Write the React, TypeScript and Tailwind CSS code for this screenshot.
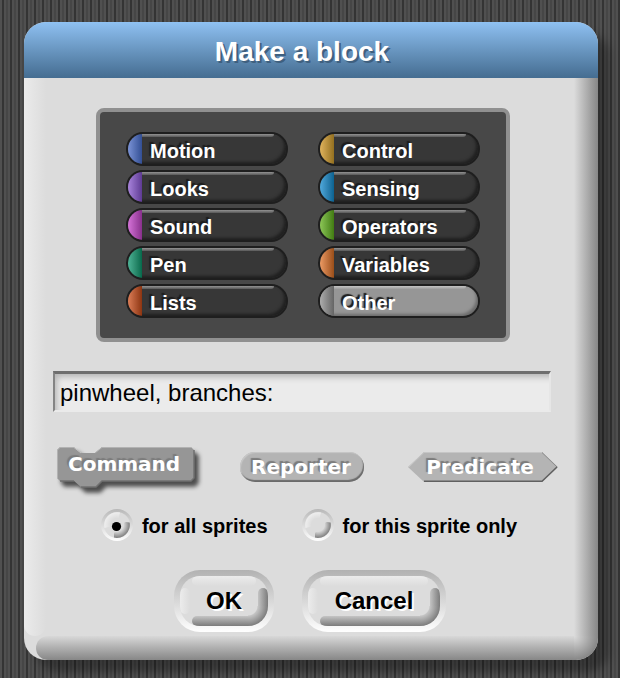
import { useState } from "react";

const UI = "font-['Liberation_Sans',Arial,sans-serif]";

const CATEGORIES = [
  { name: "Motion", tint: "from-[#7b93d6] to-[#334f94]" },
  { name: "Control", tint: "from-[#e0b35c] to-[#94701f]" },
  { name: "Looks", tint: "from-[#a984dc] to-[#5f3b94]" },
  { name: "Sensing", tint: "from-[#4fa9dc] to-[#0a6290]" },
  { name: "Sound", tint: "from-[#d573d8] to-[#89308d]" },
  { name: "Operators", tint: "from-[#8cc656] to-[#427c10]" },
  { name: "Pen", tint: "from-[#4db497] to-[#046a4c]" },
  { name: "Variables", tint: "from-[#ec9a63] to-[#9a4e18]" },
  { name: "Lists", tint: "from-[#dc7d56] to-[#8d3510]" },
  { name: "Other", tint: "from-[#adadad] to-[#656565]" },
];

function CategoryButton({ name, tint, active, onClick }: { name: string; tint: string; active: boolean; onClick: () => void }) {
  return (
    <button
      type="button"
      onClick={onClick}
      aria-pressed={active}
      className={`relative flex h-[34px] w-[162px] items-center overflow-hidden rounded-full border-2 border-[#1e1e1e] text-left ${
        active
          ? "bg-[#969696] shadow-[inset_-3px_-3px_3px_-1px_#6c6c6c]"
          : "bg-[#373737] shadow-[inset_-3px_-3px_3px_-1px_#202020]"
      }`}
    >
      <span className={`h-full w-[14px] shrink-0 bg-linear-to-r ${tint}`} />
      <span
        className={`absolute left-[14px] right-3 top-0 h-[3px] rounded-br-full bg-linear-to-b ${
          active ? "from-[#c4c4c4] to-[#9c9c9c]" : "from-[#949494] to-[#585858]"
        }`}
      />
      <span className="relative pl-2 pt-1 text-xl leading-6 font-bold text-white [text-shadow:-2px_-2px_1px_#1c1c1c]">{name}</span>
    </button>
  );
}

function PushButton({ label, width }: { label: string; width: string }) {
  return (
    <button type="button" className={`h-[62px] rounded-[26px] bg-linear-to-b from-[#b2b2b2] to-white p-1.5 ${width}`}>
      <span className="relative flex h-full items-center justify-center overflow-hidden rounded-[20px] bg-[#dcdcdc]">
        <span className="absolute top-0 right-3 left-3 h-2.5 rounded-full bg-linear-to-b from-[#ececec] to-[#dcdcdc]" />
        <span className="absolute top-3 bottom-3 left-0 w-2.5 rounded-full bg-linear-to-r from-[#ececec] to-[#dcdcdc]" />
        <span className="absolute top-3 right-0 bottom-5 w-2.5 rounded-t-full bg-linear-to-r from-[#c4c4c4] to-[#7c7c7c]" />
        <span className="absolute right-5 bottom-0 left-3 h-2.5 rounded-l-full bg-linear-to-b from-[#c4c4c4] to-[#7c7c7c]" />
        <span className="absolute right-0 bottom-0 h-5 w-5 bg-[radial-gradient(circle_at_0_0,transparent_9px,#c4c4c4_10px,#7c7c7c_20px)]" />
        <span className="relative text-2xl leading-7 font-bold text-black [text-shadow:2px_2px_0_#fff]">{label}</span>
      </span>
    </button>
  );
}

function ScopeRadio({ id, label, checked, onChange }: { id: string; label: string; checked: boolean; onChange: () => void }) {
  return (
    <div className="flex items-center gap-[9px]">
      <span className="grid h-8 w-8">
        <input
          id={id}
          type="radio"
          name="scope"
          checked={checked}
          onChange={onChange}
          className="col-start-1 row-start-1 h-8 w-8 appearance-none rounded-full bg-linear-to-b from-[#b8b8b8] to-white"
        />
        <svg viewBox="0 0 32 32" className="pointer-events-none col-start-1 row-start-1 h-8 w-8" aria-hidden="true">
          <defs>
            <radialGradient id={`${id}-shade`} cx="16" cy="16" r="13" gradientUnits="userSpaceOnUse">
              <stop offset="0.5" stopColor="#dadada" />
              <stop offset="1" stopColor="#7c7c7c" />
            </radialGradient>
            <radialGradient id={`${id}-light`} cx="16" cy="16" r="13" gradientUnits="userSpaceOnUse">
              <stop offset="0.5" stopColor="#dcdcdc" />
              <stop offset="1" stopColor="#efefef" />
            </radialGradient>
          </defs>
          <circle cx="16" cy="16" r="13" fill="#dcdcdc" />
          <path d="M3.5 19A13 13 0 0 1 19 3.5L17.5 9.5A6.5 6.5 0 0 0 9.5 17.5Z" fill={`url(#${id}-light)`} />
          <path d="M28.6 13.5A13 13 0 0 1 13 28.6V24.5Q13 23 15 22.8Q22.5 22 22.8 15Q23 13 25 13Z" fill={`url(#${id}-shade)`} />
          {checked && <circle cx="15.5" cy="17.5" r="4.6" fill="#000" />}
        </svg>
      </span>
      <label htmlFor={id} className="pt-0.5 text-xl leading-6 font-bold text-black">
        {label}
      </label>
    </div>
  );
}

const BLOCK_TEXT =
  "font-['DejaVu_Sans',Verdana,sans-serif] text-xl leading-6 font-bold text-white [text-shadow:-2px_-2px_1px_#7b7b7b]";

export default function App() {
  const [category, setCategory] = useState("Other");
  const [scope, setScope] = useState("all");
  const [name, setName] = useState("pinwheel, branches:");

  return (
    <main
      className={`${UI} min-h-screen bg-[repeating-linear-gradient(90deg,#505050_0,#505050_2px,#343434_2px,#343434_4px,#505050_4px,#505050_6px,#464646_6px,#464646_8px)] pt-[22px] pr-[22px] pb-[18px] pl-6`}
    >
      <form
        onSubmit={(e) => e.preventDefault()}
        className="relative overflow-hidden rounded-[22px] bg-[#dcdcdc] shadow-[12px_12px_8px_rgba(0,0,0,0.3)]"
      >
        <header className="flex h-14 items-center justify-center bg-linear-to-b from-[#8fc1f2] to-[#456d91] pr-[18px]">
          <h1 className="pt-1 text-[28px] leading-8 font-bold text-white [text-shadow:2px_2px_0_#3f607f]">Make a block</h1>
        </header>

        {/* Bevelled edges of the dialog body */}
        <span className="absolute top-14 bottom-6 left-0 w-[22px] rounded-b-xl bg-linear-to-r from-[#ebebeb] to-[#dcdcdc]" />
        <span className="absolute top-14 right-0 bottom-6 w-6 bg-linear-to-r from-[#dcdcdc] to-[#878787]" />
        <span className="absolute right-6 bottom-0 left-3 h-6 rounded-l-full bg-linear-to-b from-[#d8d8d8] to-[#878787]" />
        <span className="absolute right-0 bottom-0 h-6 w-6 bg-[radial-gradient(circle_at_0_0,#dcdcdc_0,#878787_24px)]" />

        <div className="relative px-[29px] pt-[30px] pb-7">
          <div className="flex justify-center pr-4">
            <div className="grid grid-cols-2 gap-x-[30px] gap-y-1 rounded-lg border-4 border-[#909090] bg-[#484848] px-[26px] py-5">
              {CATEGORIES.map((c) => (
                <CategoryButton key={c.name} {...c} active={c.name === category} onClick={() => setCategory(c.name)} />
              ))}
            </div>
          </div>

          <div className="pt-[29px] pr-[18px]">
            <input
              type="text"
              aria-label="Block name"
              value={name}
              onChange={(e) => setName(e.target.value)}
              className="block h-[41px] w-full border-2 border-t-[3px] border-t-[#6e6e6e] border-r-[#e6e6e6] border-b-[#eaeaea] border-l-[#848484] bg-[#ebebeb] pt-0.5 pl-[5px] text-2xl leading-8 text-black shadow-[inset_5px_6px_6px_-3px_#b4b4b4] outline-none"
            />
          </div>

          <div className="flex items-start justify-center gap-11 pt-[34px] pr-2">
            <button type="button" className="relative flex h-[42px] w-[140px] items-start pt-1.5 pl-3">
              <svg
                viewBox="0 0 140 42"
                className="absolute inset-0 h-full w-full overflow-visible drop-shadow-[4px_5px_2px_rgba(0,0,0,0.65)]"
                aria-hidden="true"
              >
                <path d="M1 4L4 1H18L25 7H39L46 1H135L138 4V32L135 35H46L40 41H25L18 35H4L1 32Z" fill="#969696" />
                <path d="M1.5 32V4L4 1.5H18M39 7L46 1.5H135" fill="none" stroke="#b2b2b2" />
                <path d="M18 1.5L25 7" fill="none" stroke="#c4c4c4" />
                <path d="M138 4V32L135 35H46L40 41H25M4 35H18" fill="none" stroke="#707070" strokeWidth="1.5" />
              </svg>
              <span className={`${BLOCK_TEXT} relative`}>Command</span>
            </button>

            <button
              type="button"
              className="mt-1.5 h-[30px] w-[124px] rounded-full bg-[#b4b4b4] pt-0.5 pr-0.5 shadow-[inset_1px_1px_1px_#c8c8c8,inset_-1px_-2px_1px_#6b6b6b]"
            >
              <span className={BLOCK_TEXT}>Reporter</span>
            </button>

            <button type="button" className="relative mt-1.5 h-[30px] w-[150px] pt-0.5 pr-1.5">
              <svg viewBox="0 0 150 30" className="absolute inset-0 h-full w-full" aria-hidden="true">
                <path d="M0 15L16 0H134L150 15L134 30H16Z" fill="#b4b4b4" />
                <path d="M1 15L16 .5H134" fill="none" stroke="#c6c6c6" />
                <path d="M134 .5L149 15" fill="none" stroke="#8a8a8a" />
                <path d="M149 15L134 29.3H16" fill="none" stroke="#606060" strokeWidth="1.5" />
              </svg>
              <span className={`${BLOCK_TEXT} relative`}>Predicate</span>
            </button>
          </div>

          <div role="radiogroup" aria-label="Scope" className="flex items-center justify-center gap-[34px] pt-[21px] pr-1">
            <ScopeRadio id="scope-all" label="for all sprites" checked={scope === "all"} onChange={() => setScope("all")} />
            <ScopeRadio id="scope-this" label="for this sprite only" checked={scope === "this"} onChange={() => setScope("this")} />
          </div>

          <div className="flex justify-center gap-7 pt-[29px] pr-0.5">
            <PushButton label="OK" width="w-[100px]" />
            <PushButton label="Cancel" width="w-36" />
          </div>
        </div>
      </form>
    </main>
  );
}
